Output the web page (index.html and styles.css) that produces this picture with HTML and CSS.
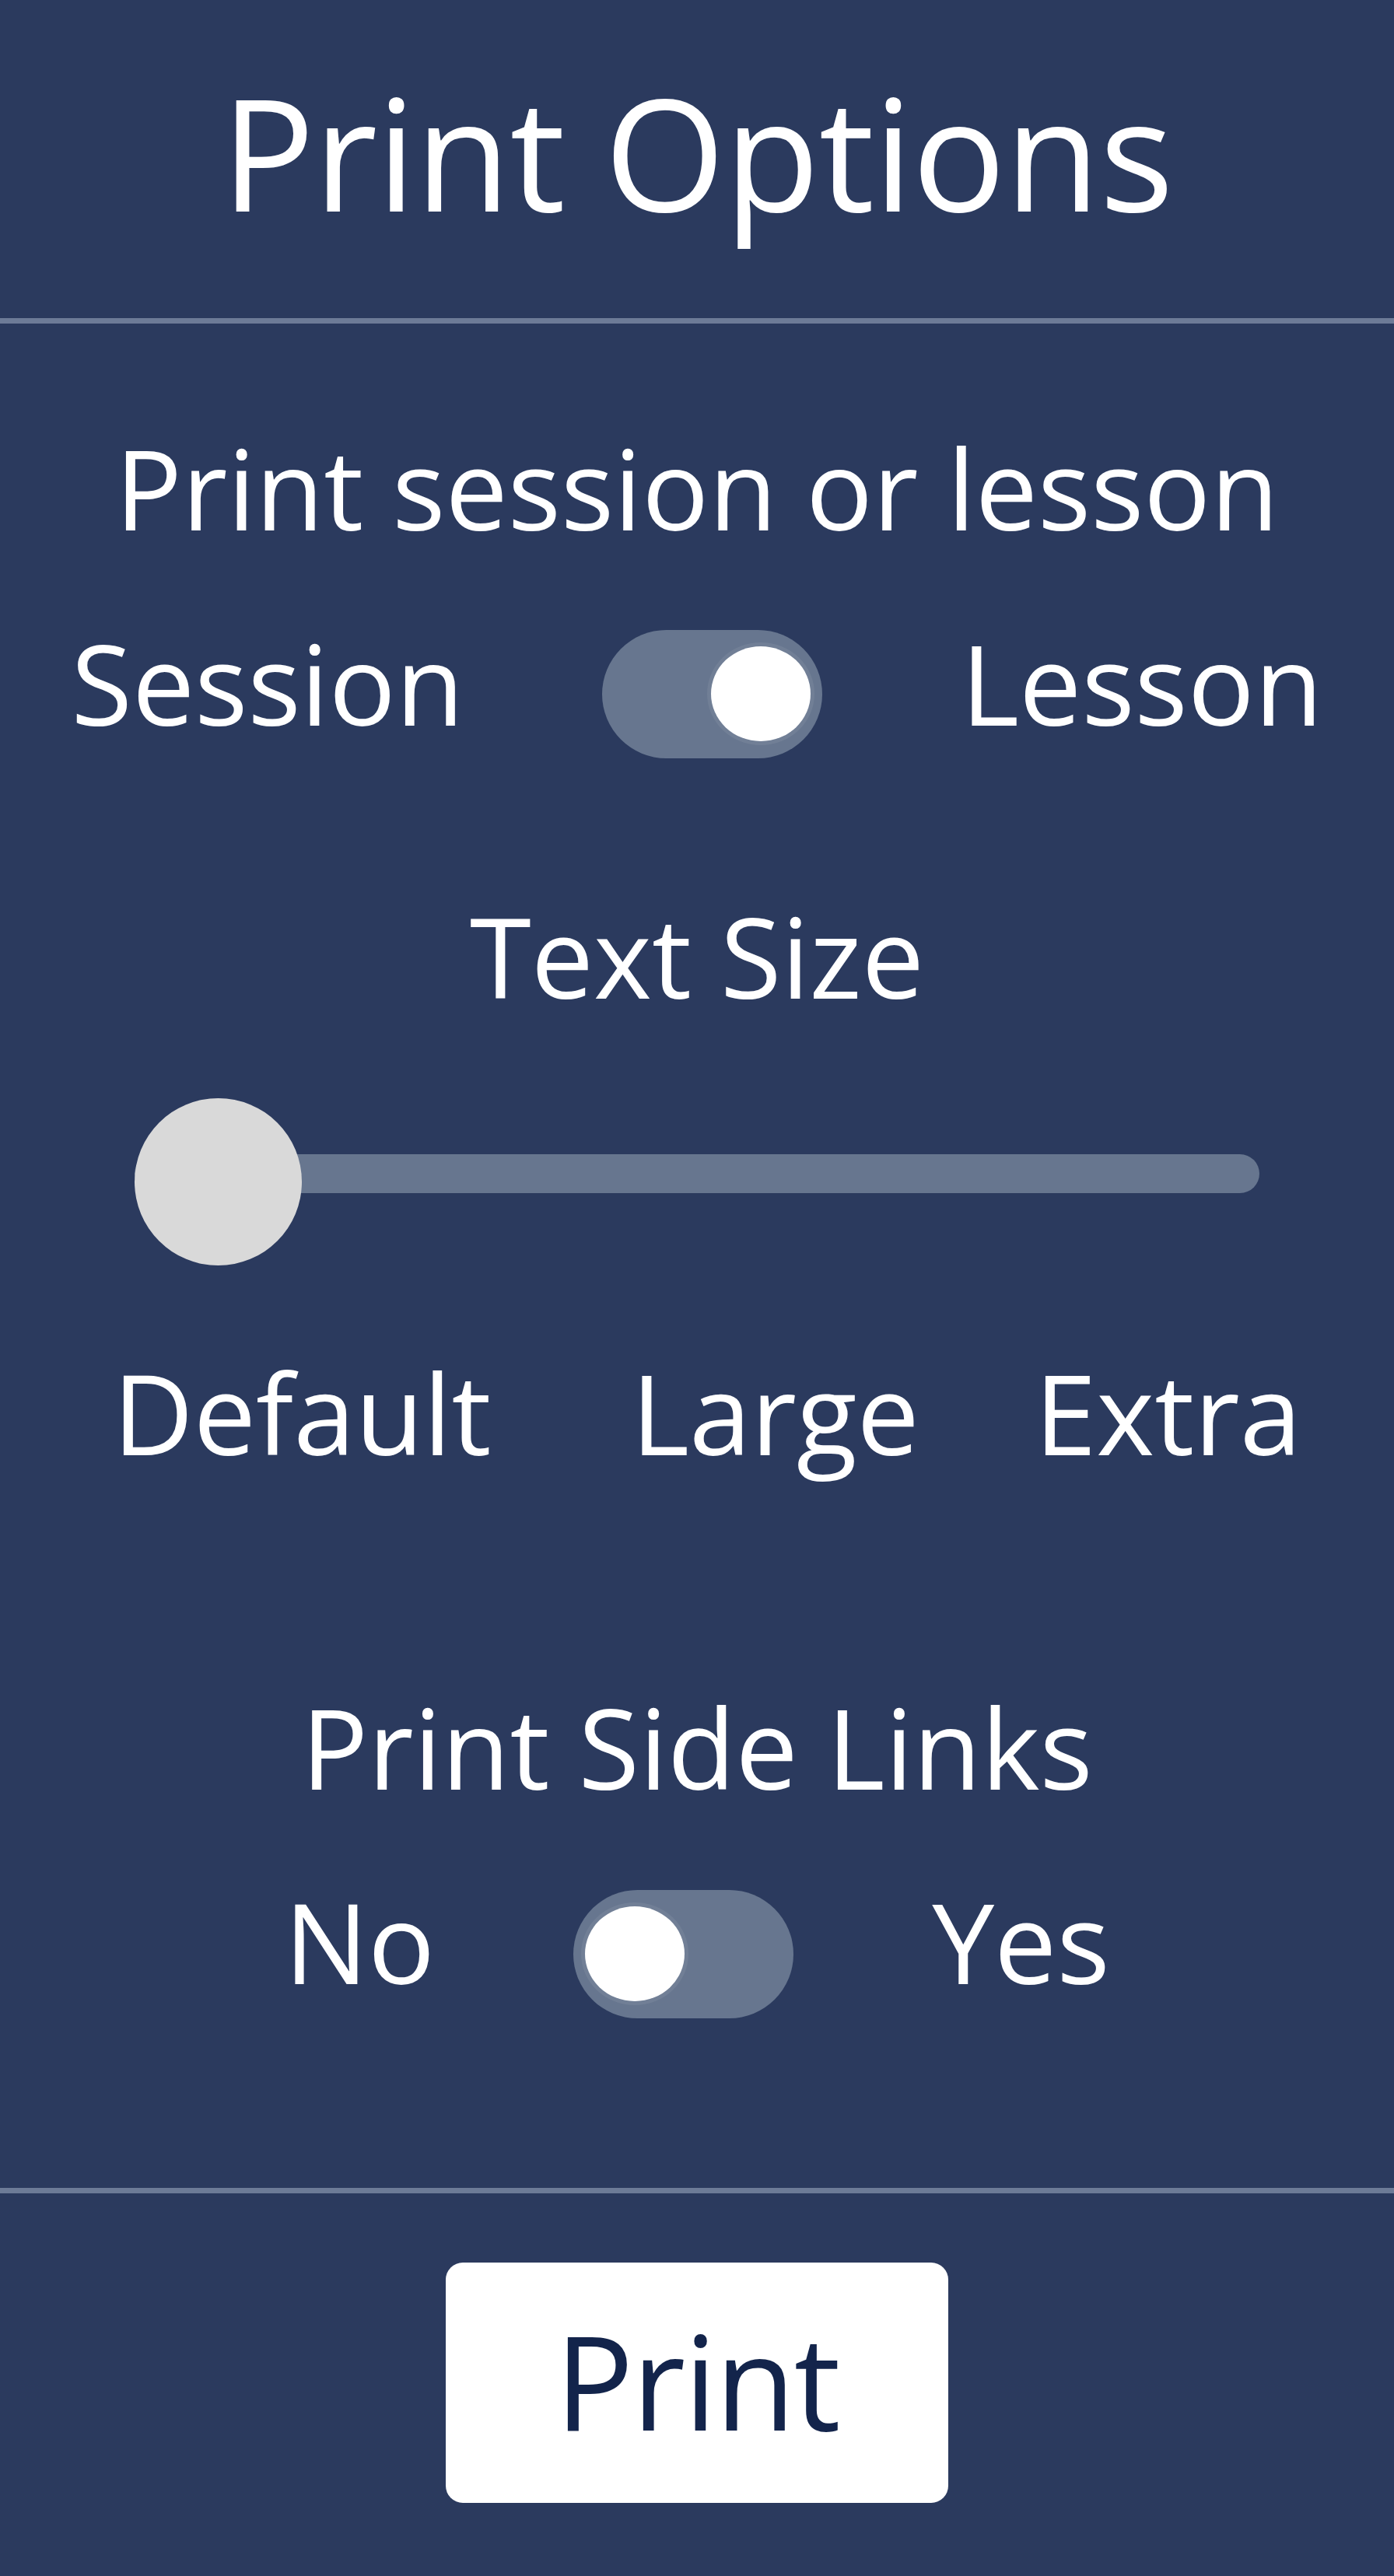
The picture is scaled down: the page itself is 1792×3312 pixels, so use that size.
FILE: index.html
```html
<!DOCTYPE html>
<html lang="en">
<head>
<meta charset="utf-8">
<title>Print Options</title>
<link rel="stylesheet" href="styles.css">
</head>
<body>
<div class="panel">
  <header class="panel-header">
    <h1 class="title">Print Options</h1>
  </header>

  <section class="option option-type">
    <div class="option-label">Print session or lesson</div>
    <div class="switch-row">
      <span class="switch-text">Session</span>
      <span class="switch switch-on"><span class="knob"></span></span>
      <span class="switch-text">Lesson</span>
    </div>
  </section>

  <section class="option option-size">
    <div class="option-label">Text Size</div>
    <div class="slider">
      <div class="slider-track"></div>
      <div class="slider-thumb"></div>
    </div>
    <div class="slider-labels">
      <span class="size-label size-default">Default</span>
      <span class="size-label size-large">Large</span>
      <span class="size-label size-extra">Extra</span>
    </div>
  </section>

  <section class="option option-links">
    <div class="option-label">Print Side Links</div>
    <div class="switch-row switch-row-links">
      <span class="switch-text">No</span>
      <span class="switch"><span class="knob"></span></span>
      <span class="switch-text">Yes</span>
    </div>
  </section>

  <footer class="panel-footer">
    <button class="print-btn" type="button">Print</button>
  </footer>
</div>
</body>
</html>
```

FILE: styles.css
```css
html, body {
  margin: 0;
  padding: 0;
}
body {
  background: #2b3a5e;
  color: #ffffff;
  font-family: "Open Sans", "Noto Sans", sans-serif;
  width: 1792px;
  height: 3312px;
  overflow: hidden;
}
.panel {
  display: flex;
  flex-direction: column;
}
.panel-header {
  padding-top: 95px;
  padding-bottom: 114px;
  border-bottom: 7px solid #6d7b97;
  text-align: center;
}
.title {
  margin: 0;
  font-size: 200px;
  line-height: 200px;
  font-weight: 400;
  letter-spacing: -1px;
}
.option {
  display: flex;
  flex-direction: column;
  align-items: center;
}
.option-label {
  font-size: 143px;
  line-height: 140px;
  text-align: center;
}
.option-type {
  padding-top: 141px;
}
.switch-row {
  display: flex;
  align-items: flex-start;
  justify-content: center;
  gap: 178px;
  margin-top: 111px;
}
.switch-text {
  font-size: 143px;
  line-height: 140px;
}
.switch {
  position: relative;
  display: block;
  width: 283px;
  height: 165px;
  margin-top: 2px;
  border-radius: 83px;
  background: #67768f;
}
.knob {
  position: absolute;
  top: 21px;
  left: 15px;
  width: 128px;
  height: 122px;
  border-radius: 50%;
  background: #ffffff;
  box-shadow: 0 0 0 5px rgba(255, 255, 255, 0.07);
}
.switch-on .knob {
  left: auto;
  right: 15px;
}
.option-size {
  margin-top: 184px;
}
.slider {
  position: relative;
  width: 1446px;
  height: 216px;
  margin-top: 113px;
}
.slider-track {
  margin-top: 72px;
  height: 50px;
  border-radius: 25px;
  background: #67768f;
}
.slider-thumb {
  position: absolute;
  left: 0;
  top: 0;
  width: 215px;
  height: 215px;
  border-radius: 50%;
  background: #d9d9d9;
}
.slider-labels {
  align-self: stretch;
  display: flex;
  padding-left: 145px;
  margin-top: 118px;
}
.size-label {
  font-size: 143px;
  line-height: 140px;
}
.size-large {
  margin-left: 180px;
}
.size-extra {
  margin-left: 148px;
}
.option-links {
  margin-top: 290px;
}
.switch-row-links {
  margin-top: 110px;
}
.switch-row-links .switch {
  margin-top: 4px;
}
.panel-footer {
  margin-top: 218px;
  border-top: 7px solid #6d7b97;
  padding-top: 89px;
  display: flex;
  justify-content: center;
}
.print-btn {
  width: 646px;
  height: 309px;
  padding: 67px 0 74px;
  border: none;
  border-radius: 22px;
  background: #ffffff;
  color: #13244b;
  font-family: "Open Sans", "Noto Sans", sans-serif;
  font-size: 168px;
  line-height: 168px;
  letter-spacing: -2px;
  text-align: center;
  box-sizing: border-box;
}
```
